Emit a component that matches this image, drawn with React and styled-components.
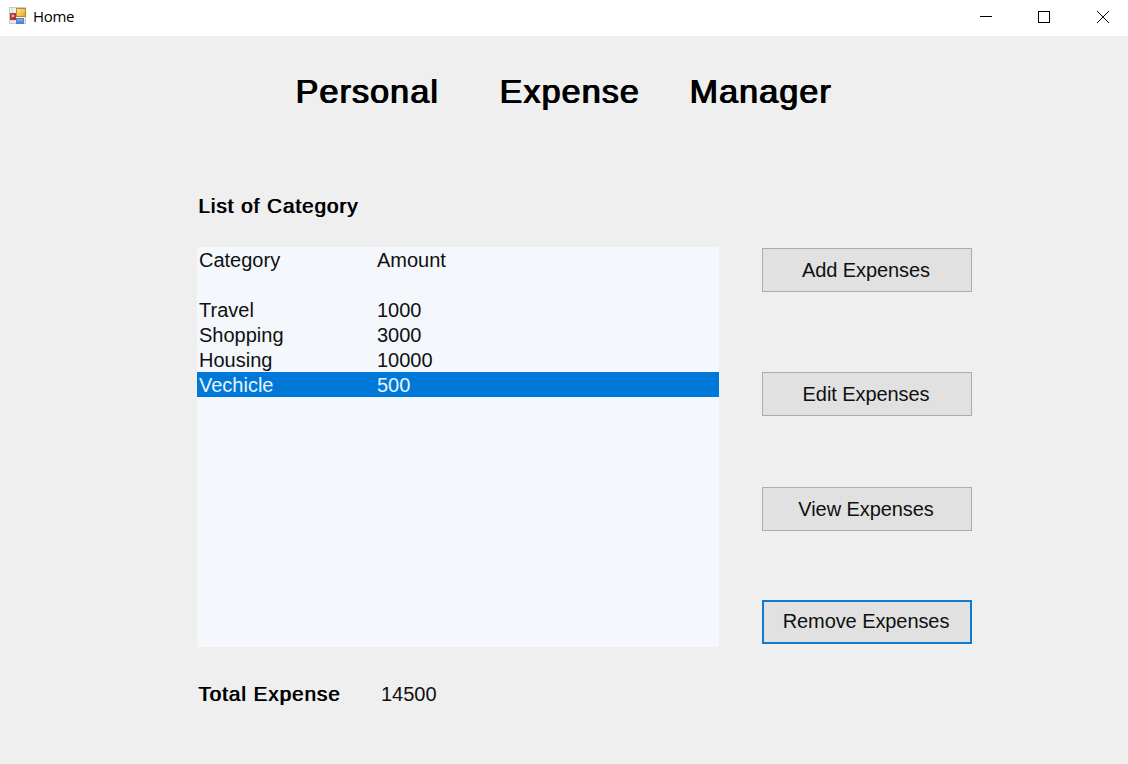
import React from "react";
import styled, { createGlobalStyle } from "styled-components";

const GlobalStyle = createGlobalStyle`
  * { box-sizing: border-box; }
  body {
    margin: 0;
    background: #efefef;
    color: #101010;
    font: 20px/25px "Liberation Sans", Arial, sans-serif;
    overflow: hidden;
  }
`;

const Window = styled.div`
  width: 1128px;
  height: 764px;
  display: flex;
  flex-direction: column;
  background: #efefef;
`;

const TitleBar = styled.header`
  height: 36px;
  flex: none;
  display: flex;
  align-items: center;
  padding: 0 18px 0 9px;
  background: #fff;
`;

const AppIcon = styled.svg`
  width: 18px;
  height: 18px;
  margin-top: -4px;
`;

const WindowName = styled.span`
  flex: 1;
  margin: -5px 0 0 6px;
  color: #000;
  font: 15px/20px "Open Sans", "Noto Sans", sans-serif;
  letter-spacing: -0.35px;
`;

const Controls = styled.div`
  display: flex;
  gap: 45px;
  margin-top: -2px;
`;

const ControlIcon = styled.svg`
  width: 14px;
  height: 14px;
  fill: none;
  stroke: #000;
`;

const Heading = styled.h1`
  display: grid;
  grid-template-columns: 204px 190px auto;
  margin: 35px 0 0 295px;
  height: 40px;
  color: #000;
  font-size: 34px;
  line-height: 40px;
  font-weight: 400;
  letter-spacing: 1.15px;
  text-shadow: 0.7px 0 #000, 1.3px 0 #000;
`;

const Content = styled.main`
  display: grid;
  grid-template-columns: 522px 210px;
  column-gap: 43px;
  margin: 83px 0 0 197px;
`;

const Strong = styled.span`
  display: block;
  margin-top: -1px;
  color: #000;
  font-size: 20.6px;
  letter-spacing: 1px;
  text-shadow: 0.9px 0 #000;
`;

const ListLabel = styled.div`
  grid-column: 1 / -1;
  display: flex;
  align-items: flex-start;
  height: 53px;
  padding-left: 1px;
`;

const List = styled.div`
  height: 400px;
  background: #f4f8fd;
`;

const Row = styled.div`
  display: grid;
  grid-template-columns: 178px 1fr;
  height: 25px;
  padding: 1px 0 0 2px;
  color: ${(p) => (p.$selected ? "#e8f3fd" : "#101010")};
  background: ${(p) => (p.$selected ? "#0078d7" : "transparent")};
`;

const Actions = styled.div`
  display: flex;
  flex-direction: column;
  padding-top: 1px;
`;

const ActionButton = styled.button`
  width: 210px;
  height: 44px;
  flex: none;
  margin: 0 0 ${(p) => p.$after || 0}px;
  padding: 0 2px ${(p) => (p.$focused ? 1 : 0)}px 0;
  border: ${(p) => (p.$focused ? "2px solid #1079d0" : "1px solid #adadad")};
  background: #e1e1e1;
  color: #101010;
  font: inherit;
  letter-spacing: -0.08px;
`;

const Total = styled.div`
  grid-column: 1 / -1;
  display: grid;
  grid-template-columns: 183px auto;
  margin-top: 35px;
  padding-left: 1px;
`;

const rows = [
  ["Category", "Amount"],
  ["", ""],
  ["Travel", "1000"],
  ["Shopping", "3000"],
  ["Housing", "10000"],
  ["Vechicle", "500"],
];

const actions = [
  { label: "Add Expenses", after: 80 },
  { label: "Edit Expenses", after: 71 },
  { label: "View Expenses", after: 69 },
  { label: "Remove Expenses", focused: true },
];

function FormIcon() {
  return (
    <AppIcon viewBox="0 0 18 18">
      <defs>
        <linearGradient id="gold" x1="0" y1="0" x2="1" y2="1">
          <stop offset="0" stopColor="#ffe9a0" />
          <stop offset="1" stopColor="#e8a50c" />
        </linearGradient>
        <linearGradient id="red" x1="0" y1="0" x2="1" y2="1">
          <stop offset="0" stopColor="#dc6a62" />
          <stop offset="1" stopColor="#a51920" />
        </linearGradient>
        <linearGradient id="blue" x1="0" y1="0" x2="0" y2="1">
          <stop offset="0" stopColor="#8fbcf8" />
          <stop offset="1" stopColor="#3f73cf" />
        </linearGradient>
      </defs>
      <rect x="0.5" y="0.5" width="16" height="16" fill="#f0f0ed" stroke="#c9cbc8" />
      <path d="M3.5 1v15M1 14h15" stroke="#d9dcda" />
      <rect x="7.5" y="1.5" width="9" height="8" fill="url(#gold)" stroke="#b78b25" />
      <rect x="1.5" y="6.5" width="5" height="6" fill="url(#red)" stroke="#a83b3e" />
      <rect x="3" y="8" width="2" height="2" fill="#f0b3aa" />
      <rect x="7.5" y="11.5" width="7" height="5" fill="url(#blue)" stroke="#5780cb" />
    </AppIcon>
  );
}

export default function App() {
  return (
    <>
      <GlobalStyle />
      <Window>
        <TitleBar>
          <FormIcon />
          <WindowName>Home</WindowName>
          <Controls>
            <ControlIcon viewBox="0 0 14 14"><path d="M2 6.5h12" /></ControlIcon>
            <ControlIcon viewBox="0 0 14 14"><rect x="1.5" y="1.5" width="11" height="11" /></ControlIcon>
            <ControlIcon viewBox="0 0 14 14"><path d="M1 1l12 12M13 1L1 13" /></ControlIcon>
          </Controls>
        </TitleBar>
        <Heading>
          <span>Personal</span>
          <span>Expense</span>
          <span>Manager</span>
        </Heading>
        <Content>
          <ListLabel><Strong>List of Category</Strong></ListLabel>
          <List>
            {rows.map(([category, amount], i) => (
              <Row key={i} $selected={category === "Vechicle"}>
                <span>{category}</span>
                <span>{amount}</span>
              </Row>
            ))}
          </List>
          <Actions>
            {actions.map((a) => (
              <ActionButton key={a.label} $after={a.after} $focused={a.focused}>
                {a.label}
              </ActionButton>
            ))}
          </Actions>
          <Total>
            <Strong>Total Expense</Strong>
            <span>14500</span>
          </Total>
        </Content>
      </Window>
    </>
  );
}
